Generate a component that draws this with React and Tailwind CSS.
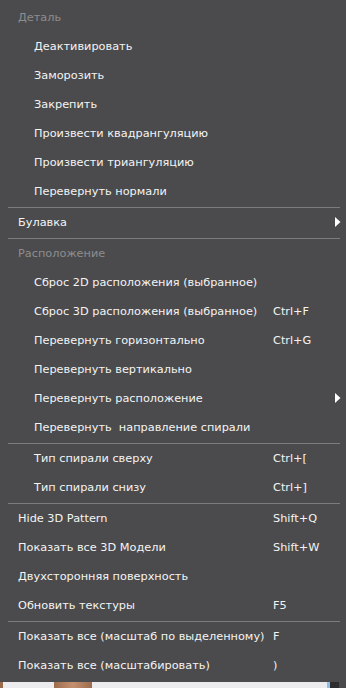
import React from "react";

const items = [
  { t: "header", label: "Деталь" },
  { t: "item", label: "Деактивировать", indent: true },
  { t: "item", label: "Заморозить", indent: true },
  { t: "item", label: "Закрепить", indent: true },
  { t: "item", label: "Произвести квадрангуляцию", indent: true },
  { t: "item", label: "Произвести триангуляцию", indent: true },
  { t: "item", label: "Перевернуть нормали", indent: true },
  { t: "sep" },
  { t: "item", label: "Булавка", sub: true },
  { t: "sep" },
  { t: "header", label: "Расположение" },
  { t: "item", label: "Сброс 2D расположения (выбранное)", indent: true },
  { t: "item", label: "Сброс 3D расположения (выбранное)", indent: true, key: "Ctrl+F" },
  { t: "item", label: "Перевернуть горизонтально", indent: true, key: "Ctrl+G" },
  { t: "item", label: "Перевернуть вертикально", indent: true },
  { t: "item", label: "Перевернуть расположение", indent: true, sub: true },
  { t: "item", label: "Перевернуть\u00a0 направление спирали", indent: true },
  { t: "sep" },
  { t: "item", label: "Тип спирали сверху", indent: true, key: "Ctrl+[" },
  { t: "item", label: "Тип спирали снизу", indent: true, key: "Ctrl+]" },
  { t: "sep" },
  { t: "item", label: "Hide 3D Pattern", key: "Shift+Q" },
  { t: "item", label: "Показать все 3D Модели", key: "Shift+W" },
  { t: "item", label: "Двухсторонняя поверхность" },
  { t: "item", label: "Обновить текстуры", key: "F5" },
  { t: "sep" },
  { t: "item", label: "Показать все (масштаб по выделенному)", key: "F" },
  { t: "item", label: "Показать все (масштабировать)", key: ")" },
];

function Arrow() {
  return (
    <svg width="6" height="10" viewBox="0 0 6 10" className="absolute left-[335px] top-[9px]">
      <path d="M0 0 L5.5 5 L0 10 Z" fill="#ffffff" />
    </svg>
  );
}

export default function App() {
  return (
    <div
      className="w-[346px] h-[688px] bg-[#e9e9ea] overflow-hidden"
      style={{ fontFamily: '"DejaVu Sans", sans-serif' }}
    >
      <div className="bg-[#4b4b4d] h-[682px] pt-[3px] flex flex-col text-[11.3px]">
        {items.map((it, i) => {
          if (it.t === "sep")
            return (
              <div key={i} className="h-[2px] flex flex-col justify-end pl-2 pr-[6px]">
                <div className="h-px bg-[#7c7c7e]" />
              </div>
            );
          if (it.t === "header")
            return (
              <div key={i} className="h-[29px] flex items-center pt-[2px] pl-[18px] text-[#8d8d8f]">
                {it.label}
              </div>
            );
          return (
            <div
              key={i}
              className={
                "relative h-[29px] flex items-center pt-[2px] text-[#f4f4f4] " +
                (it.indent ? "pl-[34px]" : "pl-[18px]")
              }
            >
              <span className={it.indent ? "w-[239px] whitespace-pre" : "w-[255px] whitespace-pre"}>
                {it.label}
              </span>
              {it.key && <span>{it.key}</span>}
              {it.sub && <Arrow />}
            </div>
          );
        })}
      </div>
      <div className="h-[6px] flex">
        <div className="w-[3px] bg-[#9a6a4a]" />
        <div className="w-[51px] bg-[#ececee]" />
        <div className="w-[38px] bg-gradient-to-r from-[#9c6c4c] via-[#c49070] to-[#9c6c4c]" />
        <div className="w-[235px] bg-[#ececee]" />
        <div className="w-[3px] bg-[#8cc0ea]" />
        <div className="w-[9px] bg-[#2e2e30]" />
        <div className="flex-1 bg-[#4a4a4c]" />
      </div>
    </div>
  );
}
